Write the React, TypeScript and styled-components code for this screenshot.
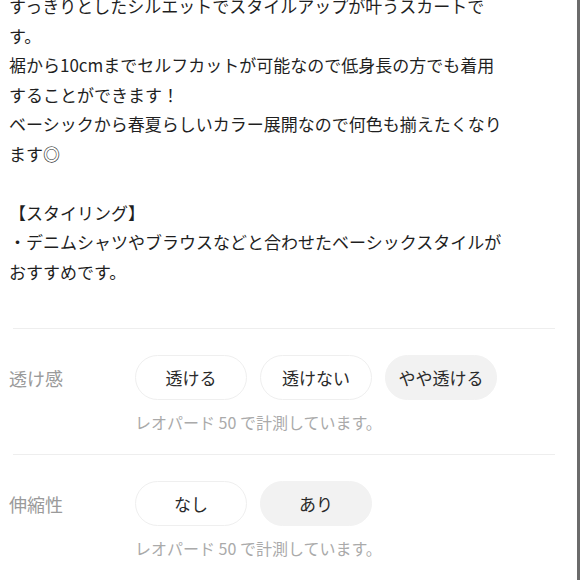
import React from "react";
import styled, { createGlobalStyle } from "styled-components";

const GlobalStyle = createGlobalStyle`
  html, body {
    margin: 0;
    padding: 0;
    background: #ffffff;
  }
  body {
    font-family: "Noto Sans CJK JP", "Noto Sans", sans-serif;
    color: #222222;
  }
`;

const Page = styled.div`
  width: 577px;
  height: 580px;
  overflow: hidden;
  border-right: 3px solid #6b6b6b;
  background: #ffffff;
`;

const Description = styled.p`
  margin: -9px 0 0 9px;
  width: 500px;
  font-size: 17px;
  line-height: 29.5px;
  white-space: pre-wrap;
  color: #1f1f1f;
`;

const Spacer = styled.div`
  height: 42px;
`;

const Divider = styled.div`
  height: 1px;
  margin: 0 22px 0 13px;
  background: #eeeeee;
`;

const Spec = styled.div`
  display: grid;
  grid-template-columns: 126px 1fr;
  padding: 26px 0 21px 9px;
`;

const Label = styled.div`
  height: 45px;
  display: flex;
  align-items: center;
  font-size: 18px;
  color: #9a9a9a;
`;

const Options = styled.div`
  display: flex;
  flex-direction: column;
  gap: 11px;
`;

const PillRow = styled.div`
  display: flex;
  gap: 13px;
`;

const Pill = styled.div<{ $selected?: boolean }>`
  width: 112px;
  height: 45px;
  box-sizing: border-box;
  border-radius: 23px;
  border: 1px solid ${(p) => (p.$selected ? "#f2f2f2" : "#efefef")};
  background: ${(p) => (p.$selected ? "#f2f2f2" : "#ffffff")};
  display: flex;
  align-items: center;
  justify-content: center;
  font-size: 17px;
  color: #2a2a2a;
`;

const Note = styled.div`
  font-size: 16px;
  line-height: 22px;
  color: #aaaaaa;
`;

const text = `すっきりとしたシルエットでスタイルアップが叶うスカートです。
裾から10cmまでセルフカットが可能なので低身長の方でも着用することができます！
ベーシックから春夏らしいカラー展開なので何色も揃えたくなります◎

【スタイリング】
・デニムシャツやブラウスなどと合わせたベーシックスタイルがおすすめです。`;

type SpecItem = {
  label: string;
  options: string[];
  selected: number;
};

const specs: SpecItem[] = [
  { label: "透け感", options: ["透ける", "透けない", "やや透ける"], selected: 2 },
  { label: "伸縮性", options: ["なし", "あり"], selected: 1 },
];

function App() {
  return (
    <Page>
      <GlobalStyle />
      <Description>{text}</Description>
      <Spacer />
      {specs.map((s) => (
        <React.Fragment key={s.label}>
          <Divider />
          <Spec>
            <Label>{s.label}</Label>
            <Options>
              <PillRow>
                {s.options.map((o, i) => (
                  <Pill key={o} $selected={i === s.selected}>
                    {o}
                  </Pill>
                ))}
              </PillRow>
              <Note>レオパード 50 で計測しています。</Note>
            </Options>
          </Spec>
        </React.Fragment>
      ))}
      <Divider />
    </Page>
  );
}

export default App;
